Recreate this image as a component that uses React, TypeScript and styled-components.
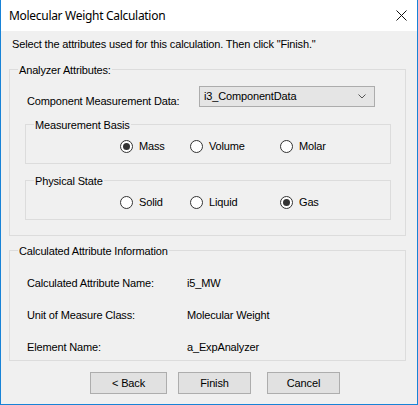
import React from 'react';
import styled, { createGlobalStyle } from 'styled-components';

const GlobalStyle = createGlobalStyle`
  html, body {
    margin: 0;
    padding: 0;
    background: #ffffff;
  }
  * {
    box-sizing: border-box;
  }
`;

interface RadioOption {
  label: string;
  checked?: boolean;
}

const basisOptions: RadioOption[] = [
  { label: 'Mass', checked: true },
  { label: 'Volume' },
  { label: 'Molar' },
];

const stateOptions: RadioOption[] = [
  { label: 'Solid' },
  { label: 'Liquid' },
  { label: 'Gas', checked: true },
];

const calcInfo = [
  { label: 'Calculated Attribute Name:', value: 'i5_MW' },
  { label: 'Unit of Measure Class:', value: 'Molecular Weight' },
  { label: 'Element Name:', value: 'a_ExpAnalyzer' },
];

const RadioGroup: React.FC<{ title: string; options: RadioOption[] }> = ({ title, options }) => (
  <InnerGroup>
    <Caption $left={8}>{title}</Caption>
    <RadioRow>
      {options.map((o) => (
        <RadioItem key={o.label}>
          <RadioCircle $checked={!!o.checked} />
          <span>{o.label}</span>
        </RadioItem>
      ))}
    </RadioRow>
  </InnerGroup>
);

const App: React.FC = () => {
  return (
    <Window>
      <GlobalStyle />
      <TitleBar>
        <Title>Molecular Weight Calculation</Title>
        <CloseButton>
          <svg width="11" height="11" viewBox="0 0 11 11">
            <path d="M0.5 0.5 L10.5 10.5 M10.5 0.5 L0.5 10.5" stroke="#111" strokeWidth="1" fill="none" />
          </svg>
        </CloseButton>
      </TitleBar>
      <Body>
        <Intro>Select the attributes used for this calculation. Then click "Finish."</Intro>
        <OuterGroup>
          <Caption $left={8}>Analyzer Attributes:</Caption>
          <FieldRow>
            <FieldLabel>Component Measurement Data:</FieldLabel>
            <Dropdown>
              <span>i3_ComponentData</span>
              <svg width="8" height="5" viewBox="0 0 8 5">
                <polyline points="0.5,0.5 4,4 7.5,0.5" stroke="#555" strokeWidth="1" fill="none" />
              </svg>
            </Dropdown>
          </FieldRow>
          <RadioGroup title="Measurement Basis" options={basisOptions} />
          <RadioGroup title="Physical State" options={stateOptions} />
        </OuterGroup>
        <InfoGroup>
          <Caption $left={8}>Calculated Attribute Information</Caption>
          <InfoGrid>
            {calcInfo.map((row) => (
              <React.Fragment key={row.label}>
                <span>{row.label}</span>
                <span>{row.value}</span>
              </React.Fragment>
            ))}
          </InfoGrid>
        </InfoGroup>
        <ButtonRow>
          <Button $width={77}>&lt; Back</Button>
          <Button $width={73}>Finish</Button>
          <Button $width={73} $gapBefore={16}>Cancel</Button>
        </ButtonRow>
      </Body>
    </Window>
  );
};

const Window = styled.div`
  width: 418px;
  height: 405px;
  display: flex;
  flex-direction: column;
  border: 1px solid #1883d7;
  border-top: none;
  background: #f0f0f0;
  font-family: 'Liberation Sans', Arial, sans-serif;
  font-size: 11px;
  letter-spacing: -0.15px;
  color: #000;
  overflow: hidden;
`;

const TitleBar = styled.div`
  height: 31px;
  flex: none;
  background: #ffffff;
  display: flex;
  align-items: center;
  justify-content: space-between;
  padding: 0 0 0 8px;
`;

const Title = styled.div`
  font-family: 'Noto Sans', 'Open Sans', sans-serif;
  font-size: 12px;
  color: #000;
  letter-spacing: -0.3px;
`;

const CloseButton = styled.div`
  width: 32px;
  height: 31px;
  display: flex;
  align-items: center;
  justify-content: center;
`;

const Body = styled.div`
  flex: 1;
  display: flex;
  flex-direction: column;
  padding: 0 11px 0 8px;
  line-height: 13px;
`;

const Intro = styled.div`
  margin: 7px 0 0 3px;
  height: 13px;
  white-space: nowrap;
`;

const Group = styled.div`
  position: relative;
  border: 1px solid #dcdcdc;
`;

const OuterGroup = styled(Group)`
  margin-top: 18px;
  padding: 16px 14px 15px 15px;
  display: flex;
  flex-direction: column;
  gap: 16px;
`;

const InnerGroup = styled(Group)`
  padding: 15px 0 10px 94px;
`;

const InfoGroup = styled(Group)`
  margin-top: 14px;
  padding: 26px 0 6px 17px;
`;

const Caption = styled.span<{ $left: number }>`
  position: absolute;
  top: -6px;
  left: ${(p) => p.$left}px;
  padding: 0 1px;
  background: #f0f0f0;
  line-height: 13px;
  white-space: nowrap;
`;

const FieldRow = styled.div`
  display: flex;
  align-items: flex-end;
  justify-content: space-between;
  padding-right: 16px;
  margin-bottom: 1px;
`;

const FieldLabel = styled.span`
  margin-left: 2px;
  margin-bottom: -1px;
`;

const Dropdown = styled.div`
  width: 176px;
  height: 21px;
  display: flex;
  align-items: center;
  justify-content: space-between;
  padding: 0 8px 0 4px;
  background: #e5e5e5;
  border: 1px solid #acacac;
`;

const RadioRow = styled.div`
  display: flex;
  height: 13px;
`;

const RadioItem = styled.label`
  display: flex;
  align-items: center;
  gap: 6px;
  &:nth-child(1) {
    width: 70px;
  }
  &:nth-child(2) {
    width: 90px;
  }
`;

const RadioCircle = styled.span<{ $checked: boolean }>`
  width: 13px;
  height: 13px;
  flex: none;
  border-radius: 50%;
  border: 1px solid #333;
  background: #fff;
  display: flex;
  align-items: center;
  justify-content: center;
  &::after {
    content: '';
    width: 7px;
    height: 7px;
    border-radius: 50%;
    background: #333;
    display: ${(p) => (p.$checked ? 'block' : 'none')};
  }
`;

const InfoGrid = styled.div`
  display: grid;
  grid-template-columns: 160px auto;
  row-gap: 19px;
`;

const ButtonRow = styled.div`
  display: flex;
  margin-top: 11px;
  padding-left: 81px;
  gap: 11px;
`;

const Button = styled.div<{ $width: number; $gapBefore?: number }>`
  width: ${(p) => p.$width}px;
  height: 22px;
  margin-left: ${(p) => (p.$gapBefore ? p.$gapBefore - 11 : 0)}px;
  display: flex;
  align-items: center;
  justify-content: center;
  background: #e1e1e1;
  border: 1px solid #adadad;
`;

export default App;
